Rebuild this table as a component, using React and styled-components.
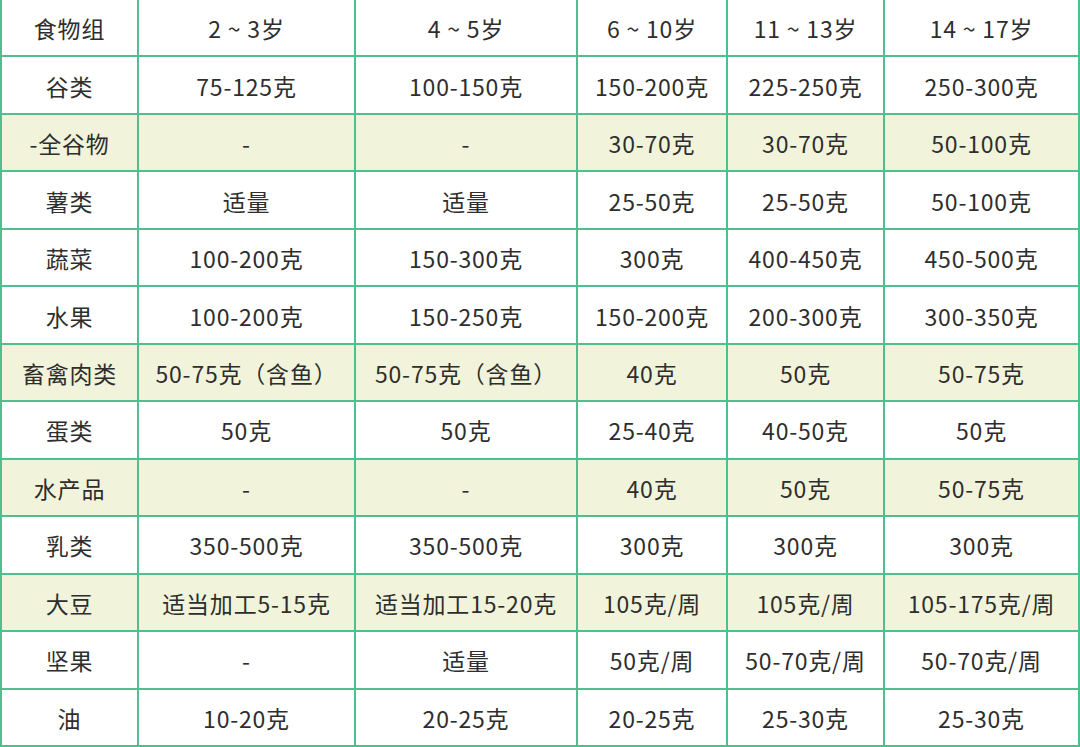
import React from 'react';
import styled, { createGlobalStyle } from 'styled-components';

const GlobalStyle = createGlobalStyle`
  html, body {
    margin: 0;
    padding: 0;
    background: #ffffff;
  }
  body {
    font-family: "Noto Sans CJK SC", "Noto Sans", sans-serif;
  }
`;

const Table = styled.div`
  display: grid;
  grid-template-columns: 135px 215px 220px 148px 155px 193px;
  grid-template-rows: repeat(13, 1fr);
  gap: 2px;
  width: 1080px;
  height: 747px;
  box-sizing: border-box;
  padding: 0 2px 2px 2px;
  background: #4fbf8f;
  overflow: hidden;
`;

const Cell = styled.div`
  display: flex;
  align-items: center;
  justify-content: center;
  padding-top: 1px;
  background: ${(props) => (props.highlight ? '#f1f4da' : '#ffffff')};
  color: #2e2e2e;
  font-size: 23px;
  letter-spacing: 0.8px;
  white-space: nowrap;
`;

const rows = [
  ['食物组', '2 ~ 3岁', '4 ~ 5岁', '6 ~ 10岁', '11 ~ 13岁', '14 ~ 17岁'],
  ['谷类', '75-125克', '100-150克', '150-200克', '225-250克', '250-300克'],
  ['-全谷物', '-', '-', '30-70克', '30-70克', '50-100克', true],
  ['薯类', '适量', '适量', '25-50克', '25-50克', '50-100克'],
  ['蔬菜', '100-200克', '150-300克', '300克', '400-450克', '450-500克'],
  ['水果', '100-200克', '150-250克', '150-200克', '200-300克', '300-350克'],
  ['畜禽肉类', '50-75克（含鱼）', '50-75克（含鱼）', '40克', '50克', '50-75克', true],
  ['蛋类', '50克', '50克', '25-40克', '40-50克', '50克'],
  ['水产品', '-', '-', '40克', '50克', '50-75克', true],
  ['乳类', '350-500克', '350-500克', '300克', '300克', '300克'],
  ['大豆', '适当加工5-15克', '适当加工15-20克', '105克/周', '105克/周', '105-175克/周', true],
  ['坚果', '-', '适量', '50克/周', '50-70克/周', '50-70克/周'],
  ['油', '10-20克', '20-25克', '20-25克', '25-30克', '25-30克'],
];

const App = () => {
  return (
    <>
      <GlobalStyle />
      <Table>
        {rows.map((row, r) => {
          const highlight = row[6] === true;
          return row.slice(0, 6).map((text, c) => (
            <Cell key={`${r}-${c}`} highlight={highlight}>
              {text}
            </Cell>
          ));
        })}
      </Table>
    </>
  );
};

export default App;
